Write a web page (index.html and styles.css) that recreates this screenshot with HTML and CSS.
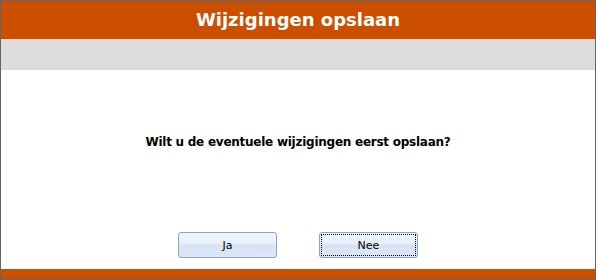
FILE: index.html
```html
<!DOCTYPE html>
<html lang="nl">
<head>
    <meta charset="UTF-8">
    <title>Wijzigingen opslaan</title>
    <link rel="stylesheet" href="styles.css">
</head>
<body>
    <div class="dialog">
        <div class="title-bar">Wijzigingen opslaan</div>
        <div class="sub-bar"></div>

        <div class="content">
            <p class="message">Wilt u de eventuele wijzigingen eerst opslaan?</p>

            <div class="buttons">
                <button class="btn">Ja</button>
                <button class="btn focused"><span>Nee</span></button>
            </div>
        </div>

        <div class="footer-bar"></div>
    </div>
</body>
</html>
```

FILE: styles.css
```css
/* General styles */
* {
    margin: 0;
    padding: 0;
    box-sizing: border-box;
}

body {
    font-family: "DejaVu Sans", Verdana, sans-serif;
    background-color: #fff;
}

/* Dialog frame */
.dialog {
    width: 596px;
    height: 280px;
    border: 1px solid #646464;
    display: flex;
    flex-direction: column;
}

.title-bar {
    height: 38px;
    background-color: #cc4e00;
    color: #fff;
    font-size: 18px;
    font-weight: bold;
    text-align: center;
    line-height: 38px;
}

.sub-bar {
    height: 31px;
    background-color: #dcdcdc;
}

.content {
    flex: 1;
    display: flex;
    flex-direction: column;
    align-items: center;
}

.message {
    margin-top: 64px;
    font-size: 12px;
    font-weight: bold;
    line-height: 16px;
    letter-spacing: -0.25px;
    color: #000;
}

/* Buttons */
.buttons {
    display: flex;
    gap: 42px;
    margin-top: 82px;
}

.btn {
    width: 99px;
    height: 26px;
    border: 1px solid #8ba4c8;
    border-radius: 3px;
    background: linear-gradient(to bottom, #f2f6fc 0%, #e6eef9 45%, #d6e3f5 50%, #dbe7f7 100%);
    font-family: "DejaVu Sans", Verdana, sans-serif;
    font-size: 11px;
    color: #000;
    cursor: pointer;
    padding: 2px;
}

.btn span {
    display: flex;
    width: 100%;
    height: 100%;
    align-items: center;
    justify-content: center;
}

.focused span {
    outline: 1px dotted #000;
}

.footer-bar {
    height: 10px;
    background-color: #cc4e00;
}
```
